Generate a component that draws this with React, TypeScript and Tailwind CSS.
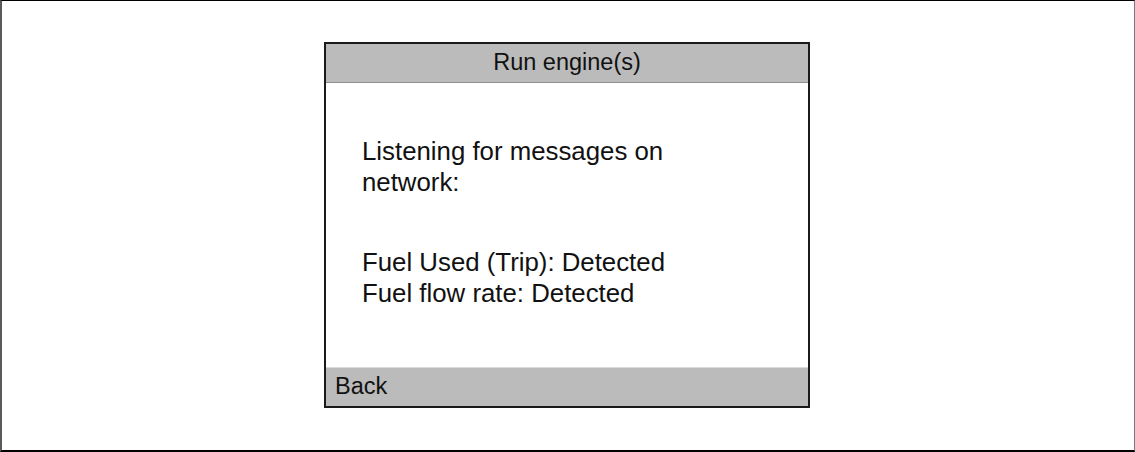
const font = { fontFamily: '"Liberation Sans", Arial, sans-serif' }

export default function App() {
  return (
    <div
      className="h-[452px] w-[1135px] border-t border-b-2 border-l-2 border-r border-t-black border-b-black border-l-[#5a5a5a] border-r-[#7a7a7a] bg-white text-[#111] flex justify-center pt-[41px] pr-[2px]"
      style={font}
    >
      <div className="w-[486px] h-[366px] border-2 border-[#1a1a1a] flex flex-col">
        {/* Title bar */}
        <div className="h-[39px] shrink-0 bg-[#bbbbbb] border-b border-[#8f8f8f] flex items-center justify-center text-[23.5px] leading-none">
          Run engine(s)
        </div>

        {/* Status */}
        <div className="flex-1 bg-white pl-[36px] pr-6 pt-[53px] text-[25.8px] leading-[31px]">
          <p>
            Listening for messages on
            <br />
            network:
          </p>
          <p className="mt-[49px]">
            Fuel Used (Trip): Detected
            <br />
            Fuel flow rate: Detected
          </p>
        </div>

        {/* Soft key */}
        <div className="h-[39px] shrink-0 bg-[#bbbbbb] border-t border-[#dcdcdc] flex items-center pl-[9px] text-[23.5px] leading-none">
          Back
        </div>
      </div>
    </div>
  )
}
